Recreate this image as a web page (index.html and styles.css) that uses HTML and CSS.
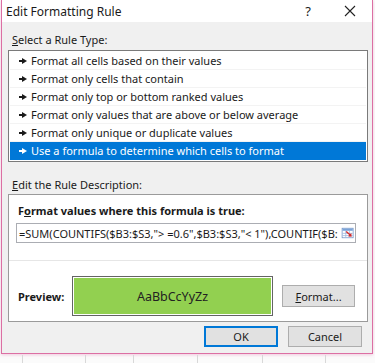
FILE: index.html
```html
<!DOCTYPE html>
<html lang="en">
<head>
    <meta charset="UTF-8">
    <meta name="viewport" content="width=device-width, initial-scale=1.0">
    <title>Edit Formatting Rule</title>
    <link rel="stylesheet" href="styles.css">
</head>
<body>
    <div class="dialog">
        <div class="titlebar">
            <span class="title">Edit Formatting Rule</span>
            <span class="help">?</span>
            <svg class="close" width="12" height="12" viewBox="0 0 12 12">
                <path d="M1 1 L11 11 M11 1 L1 11" stroke="#222" stroke-width="1.1" fill="none"/>
            </svg>
        </div>
        <div class="content">
            <div class="label"><u>S</u>elect a Rule Type:</div>
            <div class="rule-list">
                <div class="rule"><span class="arrow"></span>Format all cells based on their values</div>
                <div class="rule"><span class="arrow"></span>Format only cells that contain</div>
                <div class="rule"><span class="arrow"></span>Format only top or bottom ranked values</div>
                <div class="rule"><span class="arrow"></span>Format only values that are above or below average</div>
                <div class="rule"><span class="arrow"></span>Format only unique or duplicate values</div>
                <div class="rule selected"><span class="arrow"></span>Use a formula to determine which cells to format</div>
            </div>
            <div class="label desc-label"><u>E</u>dit the Rule Description:</div>
            <div class="desc-box">
                <div class="formula-label">F<u>o</u>rmat values where this formula is true:</div>
                <div class="formula-input">
                    <div class="formula-text">=SUM(COUNTIFS($B3:$S3,"&gt; =0.6",$B3:$S3,"&lt; 1"),COUNTIF($B:</div>
                    <svg class="range-icon" width="18" height="16" viewBox="0 0 18 16">
                        <rect x="1.5" y="1.5" width="15" height="13" fill="#fff" stroke="#6b8fc4"/>
                        <rect x="2" y="2" width="14" height="3" fill="#7aa3d8"/>
                        <path d="M2 8.5 H16 M2 11.5 H16 M6.5 5 V14 M11.5 5 V14" stroke="#9bb6de" stroke-width="1"/>
                        <path d="M7 6 L13 11" stroke="#d42a2a" stroke-width="2"/>
                        <path d="M14.5 13 L9.5 12.5 L14 8 Z" fill="#d42a2a"/>
                    </svg>
                </div>
                <div class="separator"></div>
                <div class="preview-row">
                    <span class="preview-label">Preview:</span>
                    <div class="preview-frame">
                        <div class="preview-swatch">AaBbCcYyZz</div>
                    </div>
                    <button class="btn format-btn"><u>F</u>ormat...</button>
                </div>
            </div>
            <div class="actions">
                <button class="btn ok-btn">OK</button>
                <button class="btn">Cancel</button>
            </div>
        </div>
    </div>
    <div class="sheet">
        <div class="cell c1"></div>
        <div class="cell c2"></div>
        <div class="cell c3"></div>
        <div class="cell c4"></div>
        <div class="cell c5"></div>
        <div class="cell c6"></div>
    </div>
</body>
</html>
```

FILE: styles.css
```css
body {
    margin: 0;
    background: #fbfbfb;
    font-family: "Noto Sans", "Open Sans", sans-serif;
    font-size: 11px;
    color: #1a1a1a;
    overflow: hidden;
}
.dialog {
    width: 370px;
    margin-left: 1px;
    border: 1px solid #dc6fa3;
    border-top: none;
    background: #f0f0f0;
    box-shadow: 0 1px 3px rgba(220, 110, 165, 0.35);
}
.titlebar {
    height: 22px;
    background: white;
    display: flex;
    align-items: center;
    padding-left: 4px;
}
.title {
    font-size: 12px;
    flex: 1;
}
.help {
    font-size: 13px;
    margin-right: 33px;
}
.close {
    margin-right: 16px;
}
.content {
    padding: 10px 10px 6px 6px;
}
.label {
    line-height: 16px;
    padding-left: 4px;
    margin-bottom: 2px;
}
.rule-list {
    width: 358px;
    border: 1px solid #7a7a7a;
    background: white;
    padding: 1px 0;
}
.rule {
    height: 18px;
    line-height: 18px;
    margin: 0 1px;
    padding-left: 9px;
    display: flex;
    align-items: center;
    border-bottom: 1px solid #f3f3f3;
    box-sizing: border-box;
}
.rule .arrow {
    width: 8px;
    height: 6px;
    margin-right: 4px;
    background: linear-gradient(#1a1a1a, #1a1a1a) left center / 4px 2px no-repeat;
    position: relative;
}
.rule .arrow::after {
    content: "";
    position: absolute;
    right: 0;
    top: 0;
    border-left: 5px solid #1a1a1a;
    border-top: 3px solid transparent;
    border-bottom: 3px solid transparent;
}
.rule.selected {
    background: #0078d7;
    color: white;
    border-bottom: none;
}
.rule.selected .arrow {
    background-image: linear-gradient(white, white);
}
.rule.selected .arrow::after {
    border-left-color: white;
}
.desc-label {
    margin-top: 15px;
    margin-bottom: 1px;
}
.desc-box {
    width: 358px;
    border: 1px solid #9a9a9a;
    background: white;
    padding: 8px 0 5px 0;
}
.formula-label {
    font-weight: bold;
    line-height: 16px;
    padding-left: 9px;
}
.formula-input {
    display: flex;
    align-items: center;
    margin: 4px 0 0 7px;
    width: 337px;
    height: 18px;
    border: 1px solid #abadb3;
    padding-right: 1px;
}
.formula-text {
    flex: 1;
    white-space: nowrap;
    padding-left: 2px;
    font-size: 11px;
}
.range-icon {
    margin-left: 3px;
}
.separator {
    height: 1px;
    background: #e6e6e6;
    margin-top: 17px;
}
.preview-row {
    display: flex;
    align-items: center;
    margin-top: 15px;
    padding-left: 9px;
}
.preview-label {
    font-weight: bold;
    width: 54px;
}
.preview-frame {
    width: 197px;
    height: 36px;
    border: 1px solid #646464;
    padding: 1px;
    background: white;
}
.preview-swatch {
    height: 100%;
    background: #92d050;
    display: flex;
    align-items: center;
    justify-content: center;
    font-size: 12.5px;
    color: #222;
}
.btn {
    font-family: inherit;
    font-size: 11px;
    color: #1a1a1a;
    background: #e1e1e1;
    border: 1px solid #adadad;
    width: 74px;
    height: 22px;
    padding: 0;
}
.format-btn {
    margin-left: 9px;
    width: 73px;
}
.actions {
    display: flex;
    justify-content: flex-end;
    gap: 10px;
    margin-top: 4px;
}
.actions .btn {
    height: 21px;
}
.ok-btn {
    border: 1px solid #0078d7;
    box-shadow: inset 0 0 0 1px #0078d7;
}
.sheet {
    display: flex;
    height: 20px;
    margin-top: 1px;
}
.cell {
    border-right: 1px solid #d8d8d8;
    box-sizing: border-box;
}
.c1 { width: 23px; }
.c2 { width: 63px; }
.c3 { width: 48px; }
.c4 { width: 64px; }
.c5 { width: 65px; }
.c6 { width: 63px; }
```
